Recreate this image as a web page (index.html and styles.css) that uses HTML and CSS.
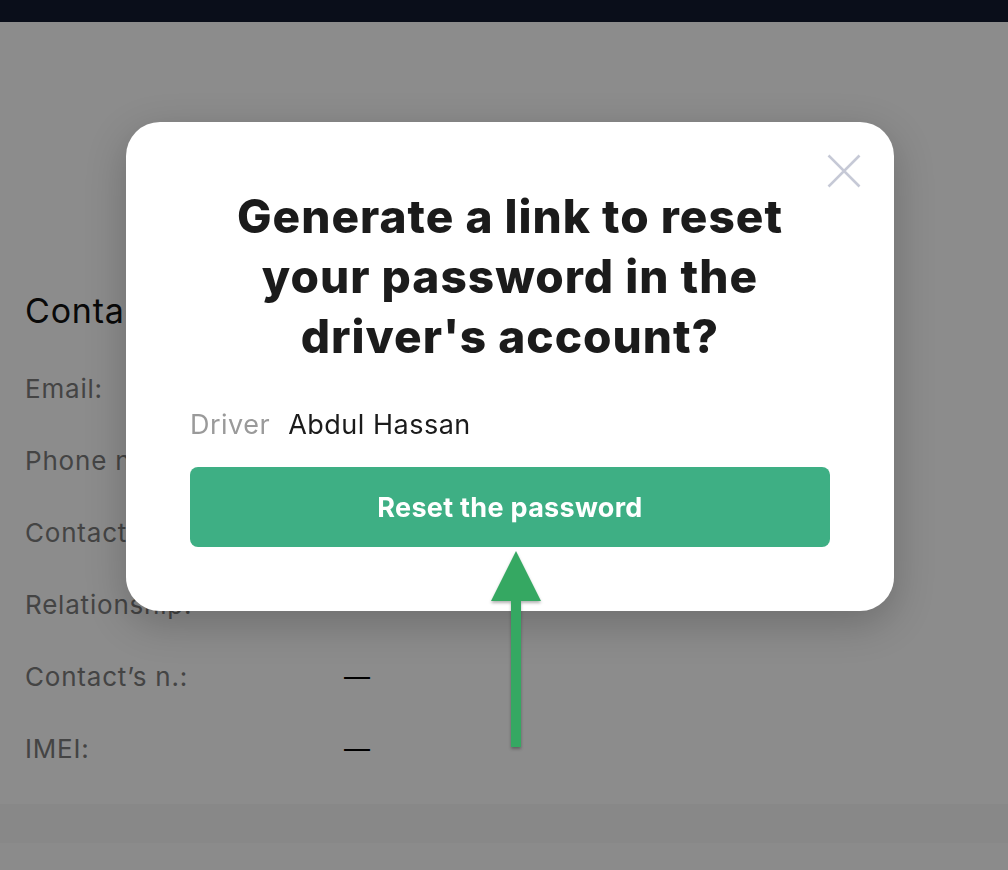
FILE: index.html
```html
<!DOCTYPE html>
<html lang="en">

<head>
  <meta charset="UTF-8">
  <meta name="viewport" content="width=device-width, initial-scale=1.0">
  <title>Driver</title>
  <link rel="stylesheet" href="styles.css">
</head>

<body>
  <div class="topbar"></div>
  <div class="page">
    <div class="top-space"></div>
    <div class="card">
      <h2 class="card-title">Contacts</h2>
      <ul class="info">
        <li><span class="label">Email:</span><span class="value">abdul.hassan@mail.com</span></li>
        <li><span class="label">Phone n.:</span><span class="value">+971 50 123 4567</span></li>
        <li><span class="label">Contact person:</span><span class="value">—</span></li>
        <li><span class="label">Relationship:</span><span class="value">—</span></li>
        <li><span class="label">Contact’s n.:</span><span class="value">—</span></li>
        <li><span class="label">IMEI:</span><span class="value">—</span></li>
      </ul>
    </div>
    <div class="band"></div>
  </div>

  <div class="overlay"></div>

  <div class="modal">
    <button type="button" class="close" aria-label="Close">
      <svg width="34" height="34" viewBox="0 0 34 34">
        <path d="M1.5 1.5 L32.5 32.5 M32.5 1.5 L1.5 32.5" stroke="#c6c9d6" stroke-width="2.6" fill="none" />
      </svg>
    </button>
    <h1 class="modal-title">Generate a link to reset your password in the driver's account?</h1>
    <div class="driver">
      <span class="driver-label">Driver</span>
      <span class="driver-name">Abdul Hassan</span>
    </div>
    <button type="button" class="reset">Reset the password</button>
  </div>

  <!-- annotation arrow -->
  <svg class="arrow" width="60" height="206" viewBox="0 0 60 206">
    <defs>
      <filter id="sh" x="-50%" y="-10%" width="200%" height="120%">
        <feDropShadow dx="0" dy="2" stdDeviation="1.5" flood-color="#000" flood-opacity="0.3" />
      </filter>
    </defs>
    <path d="M30 2 L55 52 L35 52 L35 198 L25 198 L25 52 L5 52 Z" fill="#34a862" filter="url(#sh)" />
  </svg>
</body>

</html>
```

FILE: styles.css
```css
* {
  box-sizing: border-box;
}

body {
  margin: 0;
  font-family: Inter, "Noto Sans", sans-serif;
  background-color: #fdfdfd;
  overflow: hidden;
  height: 870px;
}

.topbar {
  height: 22px;
  background-color: #0a0e1a;
  position: relative;
  z-index: 2;
}

.top-space {
  height: 228px;
  background-color: #ffffff;
}

.card {
  height: 554px;
  background-color: #ffffff;
  padding: 41px 25px 0;
}

.card-title {
  margin: 0;
  font-size: 34px;
  line-height: 40px;
  font-weight: 400;
  letter-spacing: .8px;
  color: #111;
  white-space: nowrap;
}

.info {
  margin: 21px 0 0;
  padding: 0;
  list-style: none;
}

.info li {
  height: 72px;
  display: flex;
  align-items: center;
  font-size: 26px;
  letter-spacing: .8px;
}

.info .label {
  width: 319px;
  color: #7c7c7c;
}

.info .value {
  color: #000;
}

.band {
  height: 39px;
  background-color: #f7f7f7;
}

.overlay {
  position: fixed;
  top: 22px;
  left: 0;
  right: 0;
  bottom: 0;
  background-color: rgba(0, 0, 0, .45);
}

.modal {
  position: absolute;
  left: 126px;
  top: 122px;
  width: 768px;
  padding: 64px 64px 64px;
  background-color: #fff;
  border-radius: 34px;
  box-shadow: 0 12px 40px rgba(0, 0, 0, .22);
  text-align: center;
}

.close {
  position: absolute;
  top: 32px;
  right: 33px;
  padding: 0;
  border: none;
  background: transparent;
  width: 34px;
  height: 34px;
  cursor: pointer;
}

.close svg {
  display: block;
}

.modal-title {
  margin: 0 auto;
  max-width: 580px;
  font-size: 46px;
  line-height: 60px;
  font-weight: 800;
  letter-spacing: 1px;
  color: #1b1b1b;
}

.driver {
  margin-top: 43px;
  display: flex;
  gap: 18px;
  font-size: 27px;
  line-height: 32px;
  letter-spacing: .5px;
  text-align: left;
}

.driver-label {
  color: #9a9a9a;
}

.driver-name {
  color: #1b1b1b;
}

.reset {
  margin-top: 26px;
  display: block;
  width: 100%;
  height: 80px;
  border: none;
  border-radius: 8px;
  background-color: #3eaf84;
  color: #fff;
  font-family: Inter, "Noto Sans", sans-serif;
  font-size: 27px;
  font-weight: 700;
  letter-spacing: .3px;
  cursor: pointer;
}

.arrow {
  position: absolute;
  left: 486px;
  top: 549px;
}
```
